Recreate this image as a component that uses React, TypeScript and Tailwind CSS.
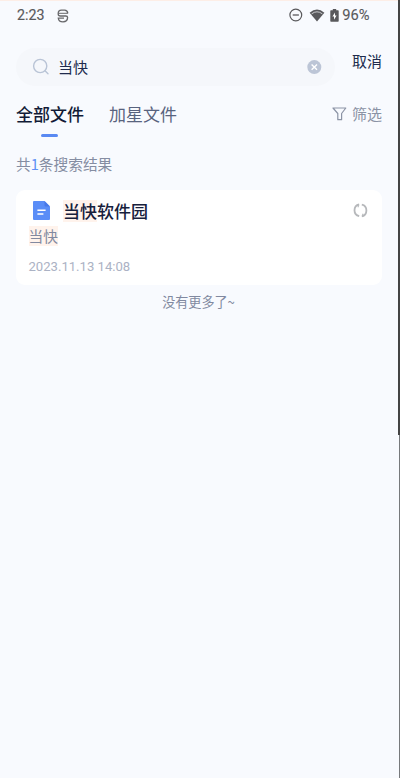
import type { ReactNode } from "react";

function AppGlyph() {
  return (
    <svg width="12" height="14" viewBox="0 0 12 14" fill="none" stroke="#68686b" strokeWidth="1.3">
      <path d="M10.8 4.4Q10.4 1.2 7.6 1.2H4.4Q1.2 1.2 1.2 4.4V5Q1.2 7 3.4 7H8.8Q10.6 7 10.6 8.6Q10.4 12.8 6 12.8Q1.6 12.8 1.3 9.2H7" />
      <path d="M1.2 4.3H10.8" strokeWidth="1" />
    </svg>
  );
}

function StatusBar() {
  return (
    <header className="flex h-[31px] items-center pr-[28.5px] pl-[17px] font-['Roboto',sans-serif] text-[#59595c]">
      <span className="w-[40px] text-[14.2px] [-webkit-text-stroke:0.15px_#59595c]">2:23</span>
      <AppGlyph />
      <div className="ml-auto flex items-center">
        <svg width="14" height="14" viewBox="0 0 14 14" fill="none" stroke="#59595c" strokeWidth="1.2">
          <circle cx="6.8" cy="7" r="5.9" />
          <path d="M3.7 7H9.9" strokeWidth="1.3" />
        </svg>
        <svg className="ml-[6px]" width="16" height="13" viewBox="0 0 16 13">
          <path d="M.6 3.8Q8-2.6 15.4 3.8L8 12.4Z" fill="#59595c" />
          <path d="M2.6 4.9Q8 .7 13.4 4.9" fill="none" stroke="#d6d7da" strokeWidth=".9" />
        </svg>
        <svg className="ml-[5px]" width="9" height="13" viewBox="0 0 9 13">
          <path d="M2.8 0H6.2V1.3H8Q8.7 1.3 8.7 2V12Q8.7 12.8 8 12.8H1Q.3 12.8 .3 12V2Q.3 1.3 1 1.3H2.8Z" fill="#59595c" />
          <path d="M5 3.4L2.4 7.6H4V10.8L6.6 6.5H5Z" fill="#fff" />
        </svg>
        <span className="ml-[3px] text-[14.7px] whitespace-nowrap [-webkit-text-stroke:0.1px_#59595c]">96%</span>
      </div>
    </header>
  );
}

function SearchRow() {
  return (
    <div className="mt-[17px] flex h-[38px] items-start px-[16px]">
      <div className="flex h-[38px] w-[319px] items-center rounded-full bg-[#f5f7fb] pr-[13px] pl-[16px]">
        <svg width="18" height="18" viewBox="0 0 18 18" fill="none" stroke="#b9c4d6" strokeWidth="1.4">
          <circle cx="8.2" cy="8" r="6.6" />
          <path d="M13 12.8L16 15.8" strokeLinecap="round" />
        </svg>
        <span className="ml-[8px] text-[15px] leading-[20px] text-[#202b4d]">当快</span>
        <svg className="ml-auto" width="15" height="15" viewBox="0 0 15 15">
          <circle cx="7.3" cy="7.1" r="7" fill="#bcc5d6" />
          <path d="M4.6 4.4L10 9.8M10 4.4L4.6 9.8" stroke="#fff" strokeWidth="1.4" />
        </svg>
      </div>
      <button className="mt-[3px] ml-auto text-[15px] leading-[20px] text-[#202b4d]">取消</button>
    </div>
  );
}

function Tabs() {
  return (
    <nav className="mt-[16px] flex h-[34px] items-start px-[16px] text-[17px] leading-[24px]">
      <div className="flex flex-col items-center">
        <span className="font-medium text-[#111a36]">全部文件</span>
        <span className="mt-[7.5px] mr-[2px] h-[3px] w-[17px] rounded-full bg-[#5989f2]" />
      </div>
      <span className="ml-[25px] text-[#58637e]">加星文件</span>
      <div className="ml-auto flex items-center text-[15px] text-[#8b93a5]">
        <svg className="mr-[5px]" width="15" height="14" viewBox="0 0 15 14" fill="none" stroke="#8b93a5" strokeWidth="1.2" strokeLinejoin="round">
          <path d="M1 1H13.8L9.6 6.5V12.7H5.8V6.5Z" />
        </svg>
        筛选
      </div>
    </nav>
  );
}

function Highlight({ children }: { children: ReactNode }) {
  return <mark className="inline-block bg-[#fff3ec] text-inherit">{children}</mark>;
}

function FileCard() {
  return (
    <article className="mx-[16px] mt-[16px] h-[95px] w-[366px] rounded-[9px] bg-white pt-[9px] pr-[14px] pl-[12.5px]">
      <div className="flex h-[24px] items-center">
        <svg className="mb-[2px] ml-[4.5px]" width="17" height="19" viewBox="0 0 17 19">
          <path d="M1 0H11.5L17 5.5V18Q17 19 16 19H1Q0 19 0 18V1Q0 0 1 0Z" fill="#5a8df7" />
          <path d="M11.5 0L17 5.5H12.5Q11.5 5.5 11.5 4.5Z" fill="#4778e8" />
          <path d="M4.4 9.2H12.6M4.4 12.9H10.4" stroke="#fff" strokeWidth="1.5" />
        </svg>
        <h2 className="ml-[13px] text-[17px] leading-[22px] font-medium whitespace-nowrap text-[#17203c]">
          <Highlight>当快</Highlight>软件园
        </h2>
        <svg className="mb-[2px] ml-auto" width="15" height="15" viewBox="0 0 15 15" fill="none" stroke="#b6b8bb" strokeWidth="1.8">
          <path d="M6.2 1.5Q1.5 2.4 1.5 7.3Q1.5 12.1 6.2 13.2" />
          <path d="M8.8 1.7Q13.4 2.7 13.4 7.4Q13.4 12.2 8.8 13.3" />
          <path d="M5.2 1V4.2M9.8 10.8V13.8" strokeWidth="1.2" />
        </svg>
      </div>
      <p className="mt-[3px] h-[20px] text-[14.7px] leading-[20px] text-[#8189a0]">
        <Highlight>当快</Highlight>
      </p>
      <time className="mt-[12px] block font-['Roboto',sans-serif] text-[13.1px] leading-[18px] text-[#abb2c4]">2023.11.13 14:08</time>
    </article>
  );
}

export default function App() {
  return (
    <div className="flex h-[778px] w-[400px] overflow-hidden bg-[#f8fafe] font-['Noto_Sans_CJK_SC',sans-serif]">
      <main className="w-[398px] shrink-0 border-t border-[#fdeee7]">
        <div className="-mt-px">
          <StatusBar />
          <SearchRow />
          <Tabs />
          <p className="mt-[18px] h-[20px] px-[16px] text-[14.7px] leading-[20px] text-[#858da2]">
            共<span className="text-[#5e91f5]">1</span>条搜索结果
          </p>
          <FileCard />
          <p className="mt-[7px] pr-[1px] text-center text-[13.1px] leading-[20px] text-[#8189a0]">没有更多了~</p>
        </div>
      </main>
      <div className="flex w-[2px] flex-col items-end">
        <div className="h-[435px] w-[2px] bg-[#444444]" />
        <div className="w-px grow bg-[#77797c]" />
      </div>
    </div>
  );
}
